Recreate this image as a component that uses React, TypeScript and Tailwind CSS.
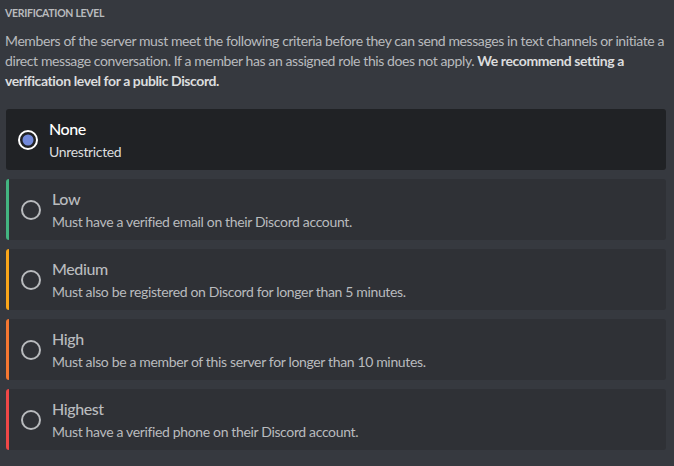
import React, { useState } from 'react';

type Nivel = {
  key: string;
  titulo: string;
  descripcion: string;
  borde: string;
};

const niveles: Nivel[] = [
  { key: 'none', titulo: 'None', descripcion: 'Unrestricted', borde: 'border-l-transparent' },
  { key: 'low', titulo: 'Low', descripcion: 'Must have a verified email on their Discord account.', borde: 'border-l-[#43b581]' },
  { key: 'medium', titulo: 'Medium', descripcion: 'Must also be registered on Discord for longer than 5 minutes.', borde: 'border-l-[#faa61a]' },
  { key: 'high', titulo: 'High', descripcion: 'Must also be a member of this server for longer than 10 minutes.', borde: 'border-l-[#f57731]' },
  { key: 'highest', titulo: 'Highest', descripcion: 'Must have a verified phone on their Discord account.', borde: 'border-l-[#f04747]' },
];

const Radio: React.FC<{ activo: boolean }> = ({ activo }) => (
  <svg width="20" height="20" viewBox="0 0 20 20" className="shrink-0">
    <circle cx="10" cy="10" r="9" fill="none" stroke={activo ? '#ffffff' : '#b9bbbe'} strokeWidth="2" />
    {activo && <circle cx="10" cy="10" r="5.5" fill="#7289da" />}
  </svg>
);

export default function App() {
  const [seleccion, setSeleccion] = useState('none');

  return (
    <div className="w-[674px] h-[466px] bg-[#36393f] pl-[5px] pr-[8px] pt-[4px] font-['Lato',sans-serif] overflow-hidden">
      {/* Header */}
      <h2 className="text-[10.5px] leading-4 font-bold uppercase tracking-[-0.3px] text-[#b9bbbe] pt-[1px]">Verification Level</h2>
      <p className="mt-[10px] mr-[-6px] text-[14px] leading-5 tracking-[-0.4px] text-[#b9bbbe]">
        Members of the server must meet the following criteria before they can send messages in text channels or initiate a direct message conversation. If a member has an assigned role this does not apply.{' '}
        <strong className="font-bold text-[#dcddde]">We recommend setting a verification level for a public Discord.</strong>
      </p>

      {/* Opciones */}
      <div className="mt-[18px] ml-[1px] flex flex-col gap-[9px]">
        {niveles.map((nivel) => {
          const activo = seleccion === nivel.key;
          return (
            <button
              key={nivel.key}
              onClick={() => setSeleccion(nivel.key)}
              className={`flex items-center text-left rounded-[3px] h-[61px] pl-[12px] ${
                activo ? 'bg-[#202225]' : `bg-[#2f3136] border-l-[3px] ${nivel.borde}`
              }`}
            >
              <Radio activo={activo} />
              <div className="ml-[11px] flex flex-col">
                <span className={`text-[16px] leading-5 font-medium tracking-[-0.4px] ${activo ? 'text-white' : 'text-[#b9bbbe]'}`}>
                  {nivel.titulo}
                </span>
                <span className={`mt-[4px] text-[14px] leading-[18px] tracking-[-0.35px] ${activo ? 'text-[#dcddde]' : 'text-[#b9bbbe]'}`}>
                  {nivel.descripcion}
                </span>
              </div>
            </button>
          );
        })}
      </div>
    </div>
  );
}
